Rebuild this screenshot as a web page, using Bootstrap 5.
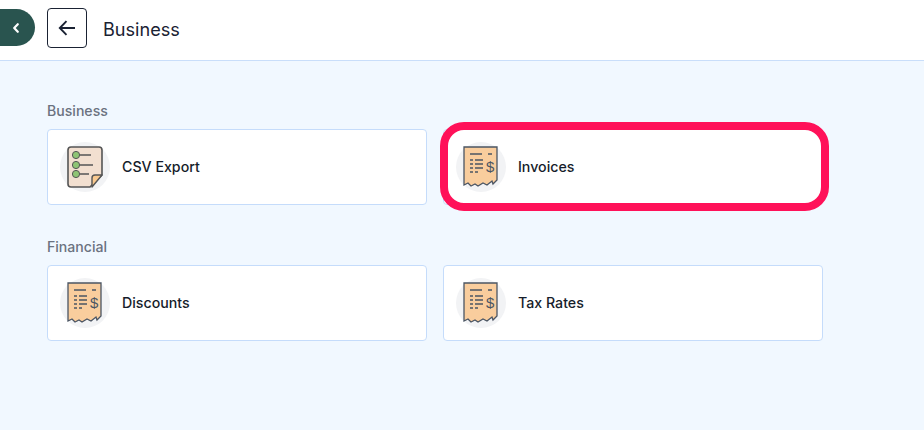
<!DOCTYPE html>
<html lang="en">
<head>
<meta charset="utf-8">
<title>Business</title>
<link href="https://cdn.jsdelivr.net/npm/bootstrap@5.3.0/dist/css/bootstrap.min.css" rel="stylesheet">
<style>
html,body{height:100%;overflow:hidden}
body{font-family:"Inter","Liberation Sans",sans-serif;background:#f1f8ff;color:#111827}
.topbar{height:61px;background:#fff;border-bottom:1px solid #c9defa;padding-bottom:4px}
.pill-toggle{width:35px;height:37px;background:#29544f;border:0;border-radius:0 19px 19px 0;padding:0 4px 0 0;margin-bottom:1px}
.back-btn{width:40px;height:40px;margin-left:12px;background:#fff;border:1px solid #1a2233;border-radius:4px;padding:0}
.page-title{font-size:18.1px;font-weight:400;margin:3px 0 0 16px;color:#1a2233;line-height:1}
.content-area{padding:41px 0 0 47px;width:823px}
.group-label{font-size:14.1px;line-height:17px;font-weight:500;color:#6b7280;margin:0 0 10px}
.tile-grid{display:grid;grid-template-columns:380px 380px;gap:16px;margin-bottom:33px}
.tile{height:76px;background:#fff;border:1px solid #c5dcfb;border-radius:4px;padding:0 0 0 12px;position:relative}
.tile-icon{width:50px;height:50px;border-radius:50%;background:#f2f3f5;flex:none}
.tile-name{font-size:14.2px;line-height:20px;font-weight:500;margin-left:12px;padding-bottom:1px;color:#161d2b}
.callout{position:absolute;left:-4px;right:-7px;top:-8px;bottom:-7px;border:8px solid #ff1159;border-radius:24px;pointer-events:none}
</style>
</head>
<body>
<header class="topbar d-flex align-items-center">
  <button class="pill-toggle d-flex align-items-center justify-content-center" aria-label="Collapse">
    <svg width="10" height="12" viewBox="0 0 10 12"><path d="M6.8 2.2 3.2 6l3.6 3.8" fill="none" stroke="#fff" stroke-width="2.2" stroke-linecap="round" stroke-linejoin="round"/></svg>
  </button>
  <button class="back-btn d-flex align-items-center justify-content-center" aria-label="Back">
    <svg width="18" height="16" viewBox="0 0 18 16"><path d="M17 8H2M8.5 1.2 1.8 8l6.7 6.8" fill="none" stroke="#1a2233" stroke-width="1.9"/></svg>
  </button>
  <h1 class="page-title">Business</h1>
</header>
<main class="content-area">
  <p class="group-label">Business</p>
  <div class="tile-grid">
    <div class="tile d-flex align-items-center">
      <span class="tile-icon d-flex align-items-center justify-content-center">
        <svg width="36" height="42" viewBox="0 0 36 42">
          <path d="M4 1h28a3 3 0 0 1 3 3v25L23 41H4a3 3 0 0 1-3-3V4a3 3 0 0 1 3-3z" fill="#f2dfd0" stroke="#555" stroke-width="1.6"/>
          <path d="M35 29h-7a3 3 0 0 0-3 3v9z" fill="#f9c98f" stroke="#555" stroke-width="1.4" stroke-linejoin="round"/>
          <g fill="#8fc474" stroke="#555" stroke-width="1"><circle cx="9" cy="9" r="3.6"/><circle cx="9" cy="19" r="3.6"/><circle cx="9" cy="28" r="3.6"/></g>
          <path d="M13 9h11M13 19h13M13 28h9" stroke="#555" stroke-width="1.5"/>
        </svg>
      </span>
      <span class="tile-name">CSV Export</span>
    </div>
    <div class="tile d-flex align-items-center">
      <span class="tile-icon d-flex align-items-center justify-content-center">
        <svg width="36" height="42" viewBox="0 0 36 42">
          <path d="M1 1H34V34L30 38 29 35 24 39 20 37 15 40 12 38 8 40 5 37 1 39Z" fill="#f9cd9d" stroke="#4b5563" stroke-width="1.3"/>
          <path d="M7 8h12M25 8h4" stroke="#4b5563" stroke-width="1.5"/>
          <path d="M7 14h3M12 14h8M7 18h3M12 18h8M7 22h3M12 22h8M7 26h3M12 26h3" stroke="#4b5563" stroke-width="1.6"/>
          <text x="23" y="26" font-family="Liberation Sans,sans-serif" font-size="15" fill="#4b5563">$</text>
        </svg>
      </span>
      <span class="tile-name">Invoices</span>
      <span class="callout"></span>
    </div>
  </div>
  <p class="group-label">Financial</p>
  <div class="tile-grid">
    <div class="tile d-flex align-items-center">
      <span class="tile-icon d-flex align-items-center justify-content-center">
        <svg width="36" height="42" viewBox="0 0 36 42">
          <path d="M1 1H34V34L30 38 29 35 24 39 20 37 15 40 12 38 8 40 5 37 1 39Z" fill="#f9cd9d" stroke="#4b5563" stroke-width="1.3"/>
          <path d="M7 8h12M25 8h4" stroke="#4b5563" stroke-width="1.5"/>
          <path d="M7 14h3M12 14h8M7 18h3M12 18h8M7 22h3M12 22h8M7 26h3M12 26h3" stroke="#4b5563" stroke-width="1.6"/>
          <text x="23" y="26" font-family="Liberation Sans,sans-serif" font-size="15" fill="#4b5563">$</text>
        </svg>
      </span>
      <span class="tile-name">Discounts</span>
    </div>
    <div class="tile d-flex align-items-center">
      <span class="tile-icon d-flex align-items-center justify-content-center">
        <svg width="36" height="42" viewBox="0 0 36 42">
          <path d="M1 1H34V34L30 38 29 35 24 39 20 37 15 40 12 38 8 40 5 37 1 39Z" fill="#f9cd9d" stroke="#4b5563" stroke-width="1.3"/>
          <path d="M7 8h12M25 8h4" stroke="#4b5563" stroke-width="1.5"/>
          <path d="M7 14h3M12 14h8M7 18h3M12 18h8M7 22h3M12 22h8M7 26h3M12 26h3" stroke="#4b5563" stroke-width="1.6"/>
          <text x="23" y="26" font-family="Liberation Sans,sans-serif" font-size="15" fill="#4b5563">$</text>
        </svg>
      </span>
      <span class="tile-name">Tax Rates</span>
    </div>
  </div>
</main>
</body>
</html>
